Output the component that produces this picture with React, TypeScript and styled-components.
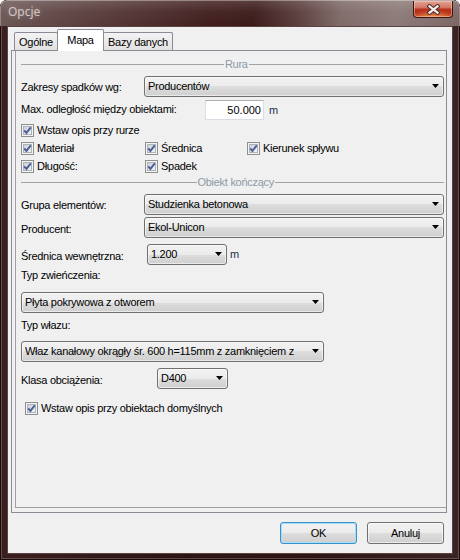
import React from "react";
import styled, { createGlobalStyle } from "styled-components";

const GlobalStyle = createGlobalStyle`
  html, body { margin: 0; padding: 0; background: #ffffff; }
  body { width: 460px; height: 560px; overflow: hidden; }
  * { box-sizing: border-box; }
`;

const uiFont = `"Liberation Sans", Arial, sans-serif`;

/* ---------- window chrome ---------- */

const Window = styled.div`
  width: 460px;
  height: 560px;
  display: flex;
  flex-direction: column;
  border-radius: 7px 7px 0 0;
  overflow: hidden;
  background: linear-gradient(to right, #3a1f1f 0%, #2b1414 40%, #2d1616 70%, #3a2424 100%);
  box-shadow: inset 0 0 0 1px #1b0b0b, inset 0 0 0 2px rgba(190, 160, 160, 0.35);
`;

const TitleBar = styled.div`
  height: 26px;
  flex: none;
  display: flex;
  justify-content: space-between;
  align-items: flex-start;
  padding: 0 7px 0 8px;
  border-radius: 7px 7px 0 0;
  background:
    linear-gradient(to bottom, rgba(255, 255, 255, 0.16) 0%, rgba(255, 255, 255, 0.04) 45%, rgba(0, 0, 0, 0) 100%),
    linear-gradient(100deg, #6c5856 0%, #573b3a 22%, #421f1f 45%, #3c1a1a 55%, #573a39 64%, #7f6a68 74%, #8c7a78 86%, #7c6664 100%);
  box-shadow: inset 0 1px 0 rgba(255, 255, 255, 0.35), inset 1px 0 0 rgba(255, 255, 255, 0.25), inset -1px 0 0 rgba(255, 255, 255, 0.2);
`;

const Title = styled.div`
  padding-top: 4px;
  font-family: "Noto Sans", "Open Sans", sans-serif;
  font-size: 12px;
  line-height: 16px;
  color: #d3c6c6;
  text-shadow: 0 0 5px rgba(255, 235, 235, 0.35);
`;

const CloseButton = styled.div`
  margin-top: 1px;
  width: 40px;
  height: 17px;
  display: flex;
  align-items: center;
  justify-content: center;
  border: 1px solid #3d1612;
  border-top: none;
  border-radius: 0 0 4px 4px;
  background:
    radial-gradient(ellipse 60% 45% at 50% 100%, rgba(255, 170, 90, 0.75), rgba(255, 120, 60, 0) 100%),
    linear-gradient(to bottom, #e0a293 0%, #d47865 40%, #b8341f 52%, #b42d18 75%, #c4471f 100%);
  box-shadow: inset 0 0 0 1px rgba(255, 220, 210, 0.45);
`;

const CloseGlyph = () => (
  <svg width="13" height="11" viewBox="-6.5 -5.5 13 11">
    <path d="M-4 -3.2 L4 3.2 M4 -3.2 L-4 3.2" stroke="#4a2b28" strokeWidth="4.2" strokeLinecap="square" fill="none" />
    <path d="M-4 -3.2 L4 3.2 M4 -3.2 L-4 3.2" stroke="#f4f0f0" strokeWidth="2.2" strokeLinecap="square" fill="none" />
  </svg>
);

const Client = styled.div`
  flex: 1;
  margin: 0 7px 6px 7px;
  display: flex;
  flex-direction: column;
  background: #f0f0f0;
  border: 1px solid #5b4443;
  font-family: ${uiFont};
  font-size: 11px;
  letter-spacing: -0.28px;
  color: #000;
`;

/* ---------- tab control ---------- */

const TabArea = styled.div`
  margin: 2px 5px 0 3px;
  display: flex;
  flex-direction: column;
`;

const TabStrip = styled.div`
  height: 21px;
  display: flex;
  align-items: flex-end;
  padding-left: 3px;
`;

const Tab = styled.div<{ $w: number; $active?: boolean }>`
  position: relative;
  width: ${(p) => p.$w}px;
  height: ${(p) => (p.$active ? 22 : 18)}px;
  margin: ${(p) => (p.$active ? "0 -1px -1px -1px" : "0")};
  z-index: ${(p) => (p.$active ? 2 : 1)};
  display: flex;
  align-items: center;
  justify-content: center;
  padding-bottom: ${(p) => (p.$active ? 2 : 0)}px;
  border: 1px solid #898c95;
  border-bottom: none;
  border-radius: 2px 2px 0 0;
  background: ${(p) => (p.$active ? "#ffffff" : "linear-gradient(to bottom, #f3f3f3 0%, #ebebeb 50%, #e1e1e1 100%)")};
  white-space: nowrap;
`;

const TabPanel = styled.div`
  height: 463px;
  display: flex;
  flex-direction: column;
  border: 1px solid #898c95;
  background: #f0f0f0;
  padding: 0 0 4px 3px;
`;

const Page = styled.div`
  flex: 1;
  display: flex;
  flex-direction: column;
  border-left: 1px solid #a0a0a0;
  border-bottom: 1px solid #a0a0a0;
  padding-left: 5px;
`;

/* ---------- form parts ---------- */

const GroupHeader = styled.div<{ $mt: number }>`
  margin-top: ${(p) => p.$mt}px;
  width: 423px;
  height: 13px;
  display: grid;
  grid-template-columns: 215fr auto 207fr;
  align-items: center;
  column-gap: 1px;
  color: #8d99a6;
  line-height: 13px;
  white-space: nowrap;
`;

const Rule = styled.div`
  height: 1px;
  background: #a3a3a3;
`;

const Row = styled.div<{ $mt: number; $h: number }>`
  margin-top: ${(p) => p.$mt}px;
  height: ${(p) => p.$h}px;
  display: flex;
  align-items: center;
`;

const Label = styled.span<{ $w?: number; $dy?: number }>`
  flex: none;
  width: ${(p) => (p.$w ? `${p.$w}px` : "auto")};
  line-height: 13px;
  white-space: nowrap;
  position: relative;
  top: ${(p) => p.$dy ?? 0}px;
`;

const Combo = styled.div<{ $w: number }>`
  flex: none;
  width: ${(p) => p.$w}px;
  height: 21px;
  display: flex;
  align-items: center;
  justify-content: space-between;
  gap: 4px;
  padding: 0 4px 1px 3px;
  border: 1px solid #707070;
  border-radius: 3px;
  background: linear-gradient(to bottom, #f2f2f2 0%, #ebebeb 50%, #dddddd 50%, #cfcfcf 100%);
  box-shadow: inset 0 0 0 1px rgba(255, 255, 255, 0.55);
`;

const ComboText = styled.span`
  flex: 1;
  min-width: 0;
  overflow: hidden;
  white-space: nowrap;
  line-height: 13px;
`;

const Arrow = () => (
  <svg width="7" height="4" viewBox="0 0 7 4" style={{ flex: "none" }}>
    <path d="M0 0 H7 L3.5 4 Z" fill="#000" />
  </svg>
);

const TextBox = styled.div<{ $w: number }>`
  flex: none;
  width: ${(p) => p.$w}px;
  height: 20px;
  display: flex;
  align-items: center;
  justify-content: flex-end;
  padding-right: 2px;
  background: #ffffff;
  border: 1px solid #dadde3;
  border-top-color: #abadb3;
  letter-spacing: 0;
`;

const Unit = styled.span<{ $ml: number }>`
  margin-left: ${(p) => p.$ml}px;
  color: #1c2f4a;
  line-height: 13px;
`;

const CheckItem = styled.label<{ $w?: number; $ml?: number }>`
  flex: none;
  width: ${(p) => (p.$w ? `${p.$w}px` : "auto")};
  margin-left: ${(p) => p.$ml ?? 0}px;
  display: flex;
  align-items: center;
  gap: 3px;
  line-height: 13px;
  white-space: nowrap;
`;

const CheckBox = () => (
  <svg width="13" height="13" viewBox="0 0 13 13" style={{ flex: "none" }}>
    <defs>
      <linearGradient id="cbFill" x1="0" y1="0" x2="1" y2="1">
        <stop offset="0" stopColor="#c9ced6" />
        <stop offset="1" stopColor="#f5f6f7" />
      </linearGradient>
    </defs>
    <rect x="0.5" y="0.5" width="12" height="12" fill="#f4f4f4" stroke="#8e8f8f" />
    <rect x="2.5" y="2.5" width="8" height="8" fill="url(#cbFill)" stroke="#aeb3b9" />
    <path d="M3.2 6.3 L5.4 8.9 L9.8 3.3" stroke="#4a5f97" strokeWidth="1.9" fill="none" />
  </svg>
);

const Check = ({ text, w, ml }: { text: string; w?: number; ml?: number }) => (
  <CheckItem $w={w} $ml={ml}>
    <CheckBox />
    <span>{text}</span>
  </CheckItem>
);

const Select = ({ w, value }: { w: number; value: string }) => (
  <Combo $w={w}>
    <ComboText>{value}</ComboText>
    <Arrow />
  </Combo>
);

/* ---------- dialog buttons ---------- */

const ButtonRow = styled.div`
  margin: 9px 8px 0 0;
  display: flex;
  justify-content: flex-end;
  gap: 10px;
`;

const Button = styled.div<{ $default?: boolean }>`
  width: 77px;
  height: 22px;
  display: flex;
  align-items: center;
  justify-content: center;
  border: 1px solid ${(p) => (p.$default ? "#3c8fc8" : "#707070")};
  border-radius: 3px;
  background: linear-gradient(to bottom, #f2f2f2 0%, #ebebeb 50%, #dddddd 50%, #cfcfcf 100%);
  box-shadow: inset 0 0 0 1px ${(p) => (p.$default ? "#9fe0fa" : "rgba(255,255,255,0.6)")};
`;

export default function App() {
  return (
    <>
      <GlobalStyle />
      <Window>
        <TitleBar>
          <Title>Opcje</Title>
          <CloseButton>
            <CloseGlyph />
          </CloseButton>
        </TitleBar>
        <Client>
          <TabArea>
            <TabStrip>
              <Tab $w={44}>Ogólne</Tab>
              <Tab $w={47} $active>
                Mapa
              </Tab>
              <Tab $w={70}>Bazy danych</Tab>
            </TabStrip>
            <TabPanel>
              <Page>
                <GroupHeader $mt={7}>
                  <Rule />
                  <span>Rura</span>
                  <Rule />
                </GroupHeader>

                <Row $mt={5} $h={21}>
                  <Label $w={123} $dy={1}>Zakresy spadków wg:</Label>
                  <Select w={300} value="Producentów" />
                </Row>

                <Row $mt={3} $h={20}>
                  <Label $w={184} $dy={-1}>Max. odległość między obiektami:</Label>
                  <TextBox $w={59}>50.000</TextBox>
                  <Unit $ml={5}>m</Unit>
                </Row>

                <Row $mt={4} $h={13}>
                  <Check text="Wstaw opis przy rurze" />
                </Row>

                <Row $mt={5} $h={13}>
                  <Check text="Materiał" w={124} />
                  <Check text="Średnica" w={102} />
                  <Check text="Kierunek spływu" />
                </Row>

                <Row $mt={5} $h={13}>
                  <Check text="Długość:" w={124} />
                  <Check text="Spadek" />
                </Row>

                <GroupHeader $mt={3}>
                  <Rule />
                  <span>Obiekt kończący</span>
                  <Rule />
                </GroupHeader>

                <Row $mt={5} $h={21}>
                  <Label $w={123} $dy={1}>Grupa elementów:</Label>
                  <Select w={300} value="Studzienka betonowa" />
                </Row>

                <Row $mt={2} $h={21}>
                  <Label $w={123} $dy={2}>Producent:</Label>
                  <Select w={300} value="Ekol-Unicon" />
                </Row>

                <Row $mt={6} $h={21}>
                  <Label $w={126} $dy={2}>Średnica wewnętrzna:</Label>
                  <Select w={80} value="1.200" />
                  <Unit $ml={3}>m</Unit>
                </Row>

                <Row $mt={4} $h={13}>
                  <Label>Typ zwieńczenia:</Label>
                </Row>

                <Row $mt={10} $h={21}>
                  <Select w={303} value="Płyta pokrywowa z otworem" />
                </Row>

                <Row $mt={6} $h={13}>
                  <Label>Typ włazu:</Label>
                </Row>

                <Row $mt={9} $h={21}>
                  <Select w={303} value="Właz kanałowy okrągły śr. 600 h=115mm z zamknięciem z" />
                </Row>

                <Row $mt={6} $h={21}>
                  <Label $w={136} $dy={2}>Klasa obciążenia:</Label>
                  <Select w={71} value="D400" />
                </Row>

                <Row $mt={13} $h={13}>
                  <Check text="Wstaw opis przy obiektach domyślnych" ml={4} />
                </Row>
              </Page>
            </TabPanel>
          </TabArea>
          <ButtonRow>
            <Button $default>OK</Button>
            <Button>Anuluj</Button>
          </ButtonRow>
        </Client>
      </Window>
    </>
  );
}
